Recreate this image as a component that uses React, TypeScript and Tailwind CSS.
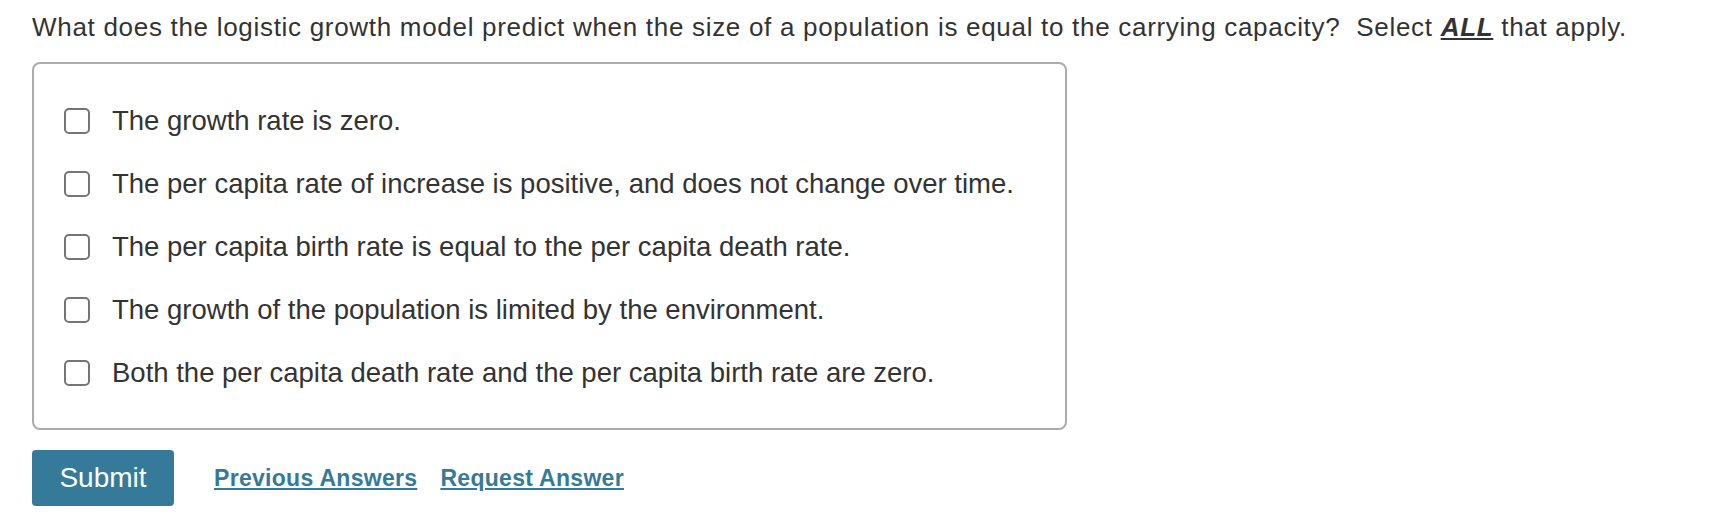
import React, { useState } from "react";

const options = [
  "The growth rate is zero.",
  "The per capita rate of increase is positive, and does not change over time.",
  "The per capita birth rate is equal to the per capita death rate.",
  "The growth of the population is limited by the environment.",
  "Both the per capita death rate and the per capita birth rate are zero.",
];

export default function App() {
  const [checked, setChecked] = useState<boolean[]>(options.map(() => false));

  const toggle = (i: number) =>
    setChecked((prev) => prev.map((v, j) => (j === i ? !v : v)));

  return (
    <div
      className="min-h-[520px] bg-white pl-[32px] pt-[12px] text-[#333333]"
      style={{ fontFamily: '"Liberation Sans", Arial, Helvetica, sans-serif' }}
    >
      <p className="whitespace-nowrap text-[26px] leading-[1.2] tracking-[0.7px]">
        What does the logistic growth model predict when the size of a population is equal to the carrying capacity?{"\u00a0 "}Select{" "}
        <span className="font-bold italic underline">ALL</span> that apply.
      </p>

      <div className="mt-[19px] w-[1035px] rounded-[8px] border-2 border-[#ababab] pl-[30px] pt-[25px] pb-[24px]">
        {options.map((opt, i) => (
          <label key={opt} className="flex h-[63px] cursor-pointer items-center gap-[22px]">
            <span
              onClick={() => toggle(i)}
              className={`flex h-[26px] w-[26px] shrink-0 items-center justify-center rounded-[5px] border-2 border-[#757575] ${
                checked[i] ? "bg-[#357a99]" : "bg-white"
              }`}
            />
            <span className="text-[27.5px] leading-[1.25]">{opt}</span>
          </label>
        ))}
      </div>

      <div className="mt-[20px] flex items-center">
        <button className="h-[56px] w-[142px] rounded-[4px] bg-[#357a99] text-[28px] text-white">
          Submit
        </button>
        <a href="#" className="ml-[40px] text-[23px] font-bold tracking-[0.3px] text-[#357a99] underline">
          Previous Answers
        </a>
        <a href="#" className="ml-[23px] text-[23px] font-bold tracking-[0.3px] text-[#357a99] underline">
          Request Answer
        </a>
      </div>
    </div>
  );
}
